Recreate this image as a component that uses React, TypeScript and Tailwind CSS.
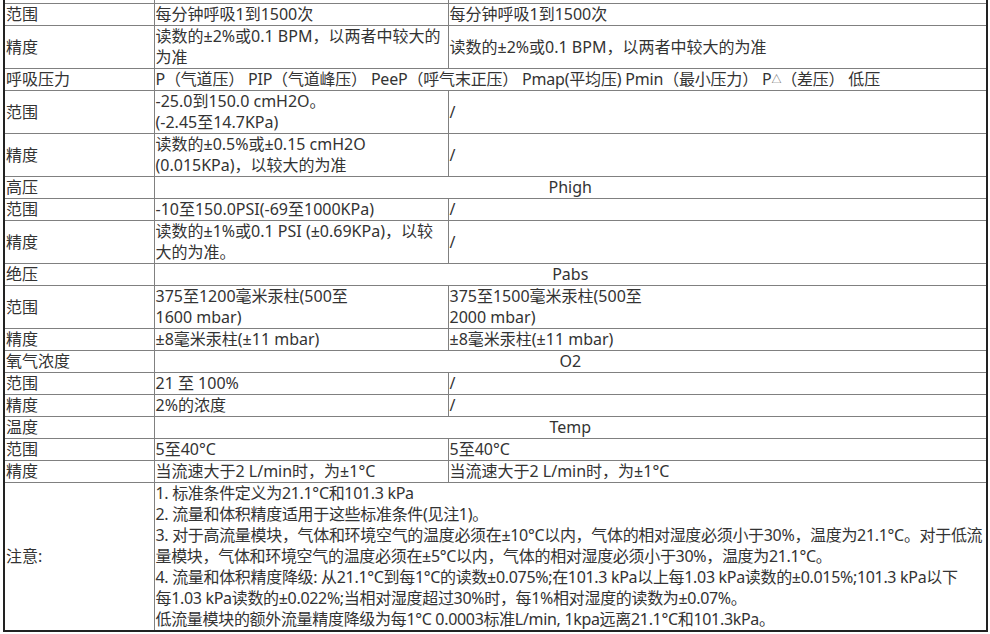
import React from "react";

const td = "border border-[#808080] px-[1px] py-0 align-middle whitespace-nowrap";

type Row = { label: string; a: React.ReactNode; b?: React.ReactNode; span?: "left" | "center" };

const rows: Row[] = [
  { label: "范围", a: "每分钟呼吸1到1500次", b: "每分钟呼吸1到1500次" },
  { label: "精度", a: <>读数的±2%或0.1 BPM，以两者中较大的<br />为准</>, b: "读数的±2%或0.1 BPM，以两者中较大的为准" },
  { label: "呼吸压力", a: <span className="tracking-[-0.2px]">P（气道压） PIP（气道峰压） PeeP（呼气末正压） Pmap(平均压) Pmin（最小压力） P<span className="text-[10px] align-[2px] text-[#666]">△</span>（差压） 低压</span>, span: "left" },
  { label: "范围", a: <>-25.0到150.0 cmH2O。<br />(-2.45至14.7KPa)</>, b: "/" },
  { label: "精度", a: <>读数的±0.5%或±0.15 cmH2O<br />(0.015KPa)，以较大的为准</>, b: "/" },
  { label: "高压", a: "Phigh", span: "center" },
  { label: "范围", a: "-10至150.0PSI(-69至1000KPa)", b: "/" },
  { label: "精度", a: <>读数的±1%或0.1 PSI (±0.69KPa)，以较<br />大的为准。</>, b: "/" },
  { label: "绝压", a: "Pabs", span: "center" },
  { label: "范围", a: <>375至1200毫米汞柱(500至<br />1600 mbar)</>, b: <>375至1500毫米汞柱(500至<br />2000 mbar)</> },
  { label: "精度", a: "±8毫米汞柱(±11 mbar)", b: "±8毫米汞柱(±11 mbar)" },
  { label: "氧气浓度", a: "O2", span: "center" },
  { label: "范围", a: "21 至 100%", b: "/" },
  { label: "精度", a: "2%的浓度", b: "/" },
  { label: "温度", a: "Temp", span: "center" },
  { label: "范围", a: "5至40°C", b: "5至40°C" },
  { label: "精度", a: "当流速大于2 L/min时，为±1°C", b: "当流速大于2 L/min时，为±1°C" },
];

export default function App() {
  return (
    <div className="w-[990px] h-[634px] overflow-hidden bg-white">
      <table
        className="table-fixed border-collapse ml-[3px] -mt-[19px] w-[983px] text-[16px] leading-[21px] text-[#333] border-x-2 border-b-2 border-x-[#222] border-b-[#222]"
        style={{ fontFamily: '"Microsoft YaHei", "Noto Sans", "Noto Sans CJK SC", sans-serif' }}
      >
        <colgroup>
          <col className="w-[150px]" />
          <col className="w-[294px]" />
          <col className="w-[539px]" />
        </colgroup>
        <tbody>
          <tr>
            <td className={td}>呼吸频率</td>
            <td className={td}>RR</td>
            <td className={td}>RR</td>
          </tr>
          {rows.map((r, i) => (
            <tr key={i}>
              <td className={td}>{r.label}</td>
              {r.span ? (
                <td colSpan={2} className={`${td} ${r.span === "center" ? "text-center" : "text-left"}`}>
                  {r.a}
                </td>
              ) : (
                <>
                  <td className={td}>{r.a}</td>
                  <td className={td}>{r.b}</td>
                </>
              )}
            </tr>
          ))}
          <tr>
            <td className={td}>注意:</td>
            <td colSpan={2} className={`${td} tracking-[-0.32px]`}>
              1. 标准条件定义为21.1°C和101.3 kPa<br />
              2. 流量和体积精度适用于这些标准条件(见注1)。<br />
              3. 对于高流量模块，气体和环境空气的温度必须在±10°C以内，气体的相对湿度必须小于30%，温度为21.1°C。对于低流<br />
              量模块，气体和环境空气的温度必须在±5°C以内，气体的相对湿度必须小于30%，温度为21.1°C。<br />
              4. 流量和体积精度降级: 从21.1°C到每1°C的读数±0.075%;在101.3 kPa以上每1.03 kPa读数的±0.015%;101.3 kPa以下<br />
              每1.03 kPa读数的±0.022%;当相对湿度超过30%时，每1%相对湿度的读数为±0.07%。<br />
              低流量模块的额外流量精度降级为每1°C 0.0003标准L/min, 1kpa远离21.1°C和101.3kPa。
            </td>
          </tr>
        </tbody>
      </table>
    </div>
  );
}
